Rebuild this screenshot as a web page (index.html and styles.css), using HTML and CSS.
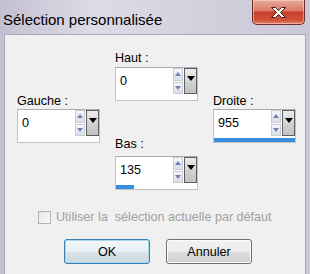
FILE: index.html
```html
<!DOCTYPE html>
<html>
<head>
  <meta charset="utf-8">
  <title>Sélection personnalisée</title>
  <link rel="stylesheet" href="styles.css">
</head>
<body>
  <div class="window">
    <div class="titlebar">
      <span class="title">Sélection personnalisée</span>
      <div class="close">
        <svg width="17" height="13" viewBox="0 0 17 13">
          <path d="M1.5 1.5h4l3 3.2 3-3.2h4l-5 5 5 5h-4l-3-3.2-3 3.2h-4l5-5z" fill="#fff" stroke="#4a1d14" stroke-width="1" stroke-linejoin="round"/>
        </svg>
      </div>
    </div>
    <div class="client">
      <div class="fields">
        <!-- colonne gauche -->
        <div class="col col-side">
          <div class="field">
            <div class="label label-side">Gauche :</div>
            <div class="spin-box">
              <div class="spin-row">
                <span class="value">0</span>
                <span class="arrows"><span class="up"></span><span class="down"></span></span>
                <span class="drop"></span>
              </div>
              <div class="bar"><div class="fill" style="width:0"></div></div>
            </div>
          </div>
        </div>
        <!-- colonne du milieu -->
        <div class="col col-mid">
          <div class="field">
            <div class="label label-top">Haut :</div>
            <div class="spin-box">
              <div class="spin-row">
                <span class="value">0</span>
                <span class="arrows"><span class="up"></span><span class="down"></span></span>
                <span class="drop"></span>
              </div>
              <div class="bar"><div class="fill" style="width:0"></div></div>
            </div>
          </div>
          <div class="field field-bottom">
            <div class="label label-bottom">Bas :</div>
            <div class="spin-box">
              <div class="spin-row">
                <span class="value">135</span>
                <span class="arrows"><span class="up"></span><span class="down"></span></span>
                <span class="drop"></span>
              </div>
              <div class="bar"><div class="fill" style="width:18px"></div></div>
            </div>
          </div>
        </div>
        <!-- colonne droite -->
        <div class="col col-side">
          <div class="field">
            <div class="label label-side">Droite :</div>
            <div class="spin-box">
              <div class="spin-row">
                <span class="value">955</span>
                <span class="arrows"><span class="up"></span><span class="down"></span></span>
                <span class="drop"></span>
              </div>
              <div class="bar"><div class="fill" style="width:100%"></div></div>
            </div>
          </div>
        </div>
      </div>

      <div class="check-row">
        <span class="checkbox"></span>
        <span class="check-label">Utiliser la&nbsp; sélection actuelle par défaut</span>
      </div>

      <div class="buttons">
        <div class="btn btn-default">OK</div>
        <div class="btn">Annuler</div>
      </div>
    </div>
  </div>
</body>
</html>
```

FILE: styles.css
```css
* {
  margin: 0;
  padding: 0;
  box-sizing: border-box;
}
body {
  font-family: "Liberation Sans", Arial, sans-serif;
  font-size: 12.6px;
  color: #000;
}
.window {
  width: 310px;
  height: 274px;
  background: linear-gradient(90deg, #c4c0d2, #dddbe6 30%, #d2cfdd 70%, #cac7d7);
  display: flex;
  flex-direction: column;
  overflow: hidden;
}
.titlebar {
  height: 34px;
  flex: none;
  display: flex;
  align-items: flex-start;
  padding-right: 5px;
}
.title {
  font-size: 15px;
  line-height: 17px;
  margin: 11px 0 0 3px;
}
.close {
  margin-left: auto;
  width: 53px;
  height: 25px;
  border: 1px solid #6e2f26;
  border-top: none;
  border-radius: 0 0 5px 5px;
  background: linear-gradient(#e9aa9c, #d97a66 45%, #c5402a 50%, #d2523b 85%, #e08a6c);
  box-shadow: inset 0 0 0 1px rgba(255, 220, 210, 0.5);
  display: flex;
  align-items: center;
  justify-content: center;
}
.client {
  flex: 1;
  margin: 0 4px 0 4px;
  border: 1px solid #a9a7b6;
  border-bottom: none;
  background: #f0f0f0;
}
.fields {
  display: flex;
  gap: 15px;
  padding-left: 12px;
}
.col {
  width: 83px;
}
.label {
  line-height: 14px;
  white-space: nowrap;
}
.label-top {
  margin-top: 16px;
  margin-bottom: 2px;
}
.label-side {
  margin-top: 59px;
  margin-bottom: 1px;
}
.label-bottom {
  margin-top: 36px;
  margin-bottom: 5px;
}
.spin-box {
  width: 83px;
  height: 34px;
  background: #fff;
  border: 1px solid #c2c2c2;
  border-top-color: #abadb3;
}
.spin-row {
  display: flex;
  height: 26px;
}
.value {
  flex: 1;
  padding: 6px 0 0 4px;
  line-height: 14px;
}
.arrows {
  width: 10px;
  display: flex;
  flex-direction: column;
  gap: 1px;
  margin-right: 1px;
}
.up,
.down {
  flex: 1;
  border: 1px solid #c8cbd6;
  background: linear-gradient(#f6f6fa, #dcdee8);
  display: flex;
  align-items: center;
  justify-content: center;
}
.up::after,
.down::after {
  content: "";
  border-left: 3px solid transparent;
  border-right: 3px solid transparent;
}
.up::after {
  border-bottom: 4px solid #6f80b2;
}
.down::after {
  border-top: 4px solid #6f80b2;
}
.drop {
  width: 13px;
  border: 1px solid #5e5e5e;
  background: linear-gradient(#ececec, #cfcfcf 60%, #c2c2c2);
  display: flex;
  justify-content: center;
  padding-top: 7px;
}
.drop::after {
  content: "";
  height: 0;
  border-left: 4px solid transparent;
  border-right: 4px solid transparent;
  border-top: 5px solid #000;
}
.bar {
  height: 4px;
  margin-top: 2px;
}
.fill {
  height: 100%;
  background: #3a8ee0;
}
.check-row {
  display: flex;
  align-items: center;
  gap: 5px;
  margin-top: 20px;
  padding-left: 33px;
  height: 14px;
}
.checkbox {
  width: 13px;
  height: 13px;
  border: 1px solid #b4b4b4;
  background: linear-gradient(135deg, #e8e8e8, #f9f9f9);
}
.check-label {
  color: #a0a0a0;
  line-height: 14px;
  white-space: nowrap;
}
.buttons {
  display: flex;
  gap: 16px;
  margin-top: 15px;
  padding-left: 59px;
}
.btn {
  width: 86px;
  height: 25px;
  border: 1px solid #707070;
  border-radius: 3px;
  background: linear-gradient(#f2f2f2, #ebebeb 50%, #dddddd 51%, #cfcfcf);
  box-shadow: inset 0 0 0 1px #fcfcfc;
  display: flex;
  align-items: center;
  justify-content: center;
  line-height: 14px;
}
.btn-default {
  border-color: #3c7fb1;
  background: linear-gradient(#f2f6f9, #e9eff3 50%, #d9e2e8 51%, #cdd8e0);
  box-shadow: inset 0 0 0 1px #a6d8f2;
}
```
